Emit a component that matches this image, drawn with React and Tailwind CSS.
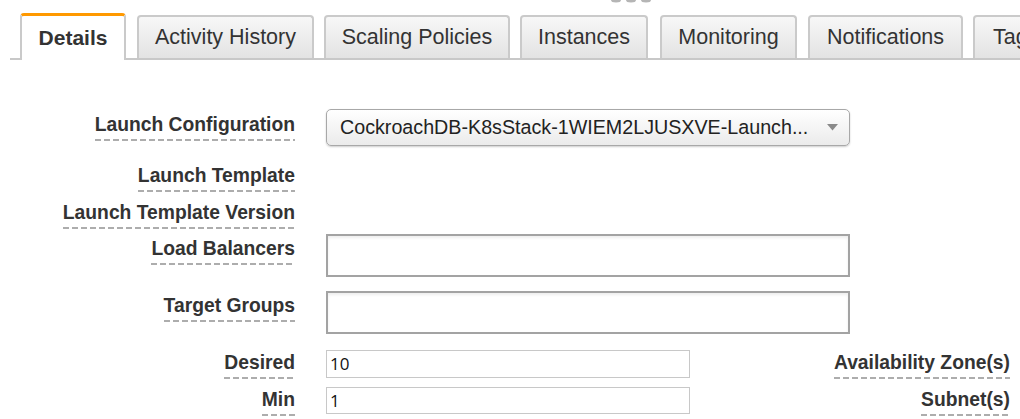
import React from "react";

const Label = ({ children }) => (
  <span className="inline-block whitespace-nowrap leading-[22px] pb-[5px] text-[19.3px] font-bold text-[#333] bg-[linear-gradient(to_right,#adadad_6px,transparent_6px)] bg-[length:9px_2px] bg-repeat-x bg-left-bottom">
    {children}
  </span>
);

const Tab = ({ label, w, ml }) => (
  <div
    className={`shrink-0 h-[43px] flex items-center justify-center border-2 border-b-0 border-[#cacaca] rounded-t-[4px] bg-gradient-to-b from-[#f7f7f7] to-[#e3e3e3] text-[21.5px] text-[#333] whitespace-nowrap overflow-hidden ${w} ${ml}`}
  >
    {label}
  </div>
);

export default function App() {
  return (
    <div className="w-[1020px] h-[419px] overflow-hidden bg-white font-['Liberation_Sans',Arial,sans-serif] text-[#333]">
      {/* cut-off dots at top */}
      <div className="h-[3px] pl-[610px]">
        <svg width="42" height="3" viewBox="0 0 42 3">
          <ellipse cx="6" cy="0" rx="5" ry="2.5" fill="#b5b5b5" />
          <ellipse cx="21" cy="0" rx="5" ry="2.5" fill="#b5b5b5" />
          <ellipse cx="36" cy="0" rx="5" ry="2.5" fill="#b5b5b5" />
        </svg>
      </div>

      {/* Tabs */}
      <div className="mt-[10px] ml-[10px] flex items-end border-b-2 border-[#c8c8c8]">
        <div className="shrink-0 ml-[10px] w-[106px] h-[47px] -mb-[2px] flex items-center justify-center bg-white border-x-2 border-[#cacaca] border-t-[3px] border-t-[#f90] rounded-t-[4px] text-[21px] font-bold text-[#333]">
          Details
        </div>
        <Tab label="Activity History" w="w-[177px]" ml="ml-[11px]" />
        <Tab label="Scaling Policies" w="w-[186px]" ml="ml-[10px]" />
        <Tab label="Instances" w="w-[128px]" ml="ml-[10px]" />
        <Tab label="Monitoring" w="w-[137px]" ml="ml-[12px]" />
        <Tab label="Notifications" w="w-[155px]" ml="ml-[11px]" />
        <div className="shrink-0 ml-[10px] w-[90px] h-[43px] flex items-center justify-start pl-[18px] border-2 border-b-0 border-[#cacaca] rounded-t-[4px] bg-gradient-to-b from-[#f7f7f7] to-[#e3e3e3] text-[21.5px] text-[#333] whitespace-nowrap">
          Tags
        </div>
      </div>

      {/* Form */}
      <div className="mt-[49px]">
        {/* Launch Configuration */}
        <div className="flex h-[37px]">
          <div className="w-[295px] text-right pt-[5px]">
            <Label>Launch Configuration</Label>
          </div>
          <div className="ml-[31px] w-[524px] h-[37px] flex items-center justify-between pl-[13px] pr-[11px] border border-[#a8a8a8] rounded-[5px] bg-gradient-to-b from-white to-[#ebebeb] shadow-[0_1px_2px_rgba(0,0,0,0.2)]">
            <span className="text-[19.7px] text-[#222] whitespace-nowrap">
              CockroachDB-K8sStack-1WIEM2LJUSXVE-Launch...
            </span>
            <svg width="11" height="7" viewBox="0 0 11 7">
              <path d="M0 0 L11 0 L5.5 6.5 Z" fill="#8a8a8a" />
            </svg>
          </div>
        </div>

        {/* Launch Template */}
        <div className="flex mt-[19px]">
          <div className="w-[295px] text-right">
            <Label>Launch Template</Label>
          </div>
        </div>

        {/* Launch Template Version */}
        <div className="flex mt-[10px]">
          <div className="w-[295px] text-right">
            <Label>Launch Template Version</Label>
          </div>
        </div>

        {/* Load Balancers */}
        <div className="flex mt-[5px] h-[43px]">
          <div className="w-[295px] text-right pt-[4px]">
            <Label>Load Balancers</Label>
          </div>
          <div className="ml-[31px] w-[524px] h-[43px] border-2 border-[#a3a3a3] bg-white shadow-[inset_0_2px_3px_rgba(0,0,0,0.07)]" />
        </div>

        {/* Target Groups */}
        <div className="flex mt-[14px] h-[43px]">
          <div className="w-[295px] text-right pt-[4px]">
            <Label>Target Groups</Label>
          </div>
          <div className="ml-[31px] w-[524px] h-[43px] border-2 border-[#a3a3a3] bg-white shadow-[inset_0_2px_3px_rgba(0,0,0,0.07)]" />
        </div>

        {/* Desired */}
        <div className="flex mt-[16px] h-[28px]">
          <div className="w-[295px] text-right pt-[2px]">
            <Label>Desired</Label>
          </div>
          <div className="ml-[31px] w-[364px] h-[28px] flex items-center pl-[3px] border border-[#c8c8c8] bg-white font-['Open_Sans',sans-serif] text-[17px] text-[#111]">
            10
          </div>
          <div className="flex-1 text-right pr-[10px] pt-[2px]">
            <Label>Availability Zone(s)</Label>
          </div>
        </div>

        {/* Min */}
        <div className="flex mt-[9px] h-[29px]">
          <div className="w-[295px] text-right pt-[2px]">
            <Label>Min</Label>
          </div>
          <div className="ml-[31px] w-[364px] h-[27px] flex items-center pl-[3px] border border-[#c8c8c8] bg-white font-['Open_Sans',sans-serif] text-[17px] text-[#111]">
            1
          </div>
          <div className="flex-1 text-right pr-[10px] pt-[2px]">
            <Label>Subnet(s)</Label>
          </div>
        </div>
      </div>
    </div>
  );
}
